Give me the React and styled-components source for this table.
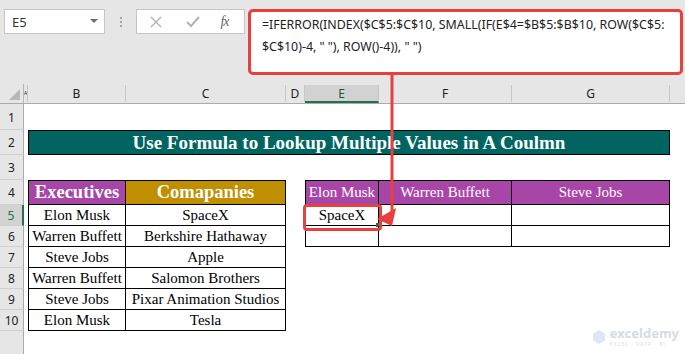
import styled, { createGlobalStyle } from 'styled-components';

const COLS = '24px 4px 98px 160px 19px 74px 133px 158px 15px';
const LETTERS = ['A', 'B', 'C', 'D', 'E', 'F', 'G', ''];

const purple = '#a846a8';
const gold = '#bf8f00';
const teal = '#006561';
const red = '#e8413d';
const green = '#217346';

const rows = [
  { n: 1, h: 26, cells: {} },
  { n: 2, h: 25, title: 'Use Formula to Lookup Multiple Values in A Coulmn' },
  { n: 3, h: 25, cells: {} },
  {
    n: 4,
    h: 25,
    top: true,
    cells: {
      B: { text: 'Executives', bg: purple, bold: true },
      C: { text: 'Comapanies', bg: gold, bold: true },
      E: { text: 'Elon Musk', bg: purple },
      F: { text: 'Warren Buffett', bg: purple },
      G: { text: 'Steve Jobs', bg: purple },
    },
  },
  {
    n: 5,
    h: 21,
    active: true,
    cells: {
      B: { text: 'Elon Musk' },
      C: { text: 'SpaceX' },
      E: { text: 'SpaceX', handle: true },
      F: { text: '' },
      G: { text: '' },
    },
  },
  {
    n: 6,
    h: 21,
    cells: {
      B: { text: 'Warren Buffett' },
      C: { text: 'Berkshire Hathaway' },
      E: { text: '' },
      F: { text: '' },
      G: { text: '' },
    },
  },
  { n: 7, h: 21, cells: { B: { text: 'Steve Jobs' }, C: { text: 'Apple' } } },
  { n: 8, h: 21, cells: { B: { text: 'Warren Buffett' }, C: { text: 'Salomon Brothers' } } },
  { n: 9, h: 21, cells: { B: { text: 'Steve Jobs' }, C: { text: 'Pixar Animation Studios' } } },
  { n: 10, h: 21, cells: { B: { text: 'Elon Musk' }, C: { text: 'Tesla' } } },
];

const App = () => (
  <>
    <GlobalStyle />
    <Page>
      <TopBar>
        <NameBox>
          E5
          <Caret />
        </NameBox>
        <Grip>
          <i />
          <i />
          <i />
        </Grip>
        <FxButtons>
          <FxIcon>
            <svg width="12" height="12" viewBox="0 0 12 12">
              <path d="M1 1 L11 11 M11 1 L1 11" stroke="#b3b3b3" strokeWidth="1.4" fill="none" />
            </svg>
          </FxIcon>
          <FxIcon>
            <svg width="14" height="12" viewBox="0 0 14 12">
              <path d="M1 6 L5 10 L13 1" stroke="#b3b3b3" strokeWidth="2" fill="none" />
            </svg>
          </FxIcon>
          <FxLabel>fx</FxLabel>
        </FxButtons>
        <FormulaBox>
          =IFERROR(INDEX($C$5:$C$10, SMALL(IF(E$4=$B$5:$B$10, ROW($C$5:
          <br />
          $C$10)-4, " "), ROW()-4)), " ")
        </FormulaBox>
      </TopBar>

      <HeaderRow>
        <Corner />
        {LETTERS.map((l, i) => (
          <ColHead key={i} $active={l === 'E'} $narrow={l === 'A'}>
            {l}
          </ColHead>
        ))}
      </HeaderRow>

      {rows.map((r) => (
        <Row key={r.n} $h={r.h}>
          <RowHead $active={r.active}>{r.n}</RowHead>
          <Cell />
          {r.title ? (
            <Title>{r.title}</Title>
          ) : (
            ['B', 'C', 'D', 'E', 'F', 'G'].map((c) => {
              const cell = r.cells[c];
              if (!cell) return <Cell key={c} />;
              return (
                <Cell
                  key={c}
                  $boxed
                  $top={r.top}
                  $left={c === 'B' || c === 'E'}
                  $bg={cell.bg}
                  $bold={cell.bold}
                  $light={!!cell.bg}
                >
                  {cell.text}
                  {cell.handle && <Handle />}
                </Cell>
              );
            })
          )}
          <Cell />
        </Row>
      ))}

      <Filler>
        <RowHead $blank />
      </Filler>

      <Selection />
      <Arrow width="685" height="354" viewBox="0 0 685 354">
        <rect x="390.5" y="75" width="3" height="138" fill={red} />
        <polygon points="377,219 396,208 392,226" fill={red} />
      </Arrow>

      <Watermark>
        <svg width="14" height="16" viewBox="0 0 14 16">
          <path d="M7 1 L13 4.5 L13 11.5 L7 15 L1 11.5 L1 4.5 Z" fill="#dfe6f5" />
        </svg>
        <WmText>
          <WmName>exceldemy</WmName>
          <WmTag>EXCEL · DATA · BI</WmTag>
        </WmText>
      </Watermark>
    </Page>
  </>
);

const GlobalStyle = createGlobalStyle`
  body {
    margin: 0;
    background: #fff;
    overflow: hidden;
  }
`;

const Page = styled.div`
  position: relative;
  width: 685px;
  height: 354px;
  overflow: hidden;
  background: #fff;
  font-family: 'Liberation Serif', serif;
`;

const TopBar = styled.div`
  display: flex;
  align-items: flex-start;
  height: 84px;
  padding: 9px 0 0 4px;
  box-sizing: border-box;
  background: #e6e6e6;
  font-family: 'Noto Sans', sans-serif;
`;

const NameBox = styled.div`
  position: relative;
  display: flex;
  align-items: center;
  width: 101px;
  height: 25px;
  padding-left: 7px;
  box-sizing: border-box;
  border: 1px solid #c6c6c6;
  background: #fff;
  color: #333;
  font-size: 13px;
`;

const Caret = styled.span`
  position: absolute;
  right: 6px;
  top: 9px;
  border-left: 4px solid transparent;
  border-right: 4px solid transparent;
  border-top: 4px solid #6d6d6d;
`;

const Grip = styled.div`
  display: flex;
  flex-direction: column;
  align-items: center;
  gap: 2px;
  width: 31px;
  padding-top: 8px;

  i {
    width: 2px;
    height: 2px;
    background: #a5a5a5;
  }
`;

const FxButtons = styled.div`
  display: grid;
  grid-template-columns: 38px 36px 1fr;
  align-items: center;
  justify-items: center;
  width: 109px;
  height: 25px;
  padding-right: 6px;
  box-sizing: border-box;
  border: 1px solid #c6c6c6;
  background: #fff;
`;

const FxIcon = styled.span`
  display: flex;
`;

const FxLabel = styled.span`
  color: #666;
  font-family: 'Liberation Serif', serif;
  font-style: italic;
  font-size: 14px;
  letter-spacing: -1px;
`;

const FormulaBox = styled.div`
  width: 435px;
  height: 66px;
  margin-left: 3px;
  padding: 2px 0 0 11px;
  box-sizing: border-box;
  border: 3px solid ${red};
  border-radius: 5px;
  background: #fff;
  color: #222;
  font-size: 12.4px;
  line-height: 22px;
  white-space: nowrap;
  overflow: hidden;
`;

const HeaderRow = styled.div`
  display: grid;
  grid-template-columns: ${COLS};
  height: 20px;
  background: #e6e6e6;
  border-bottom: 1px solid #ababab;
  box-sizing: border-box;
  font-family: 'Noto Sans', sans-serif;
`;

const Corner = styled.div`
  position: relative;
  border-right: 1px solid #b5b5b5;

  &::after {
    content: '';
    position: absolute;
    right: 3px;
    bottom: 3px;
    border-left: 11px solid transparent;
    border-bottom: 11px solid #b8b8b8;
  }
`;

const ColHead = styled.div`
  display: flex;
  align-items: center;
  justify-content: ${(p) => (p.$narrow ? 'flex-start' : 'center')};
  margin-top: 1px;
  overflow: hidden;
  border-right: 1px solid #c6c6c6;
  border-bottom: 2px solid ${(p) => (p.$active ? green : 'transparent')};
  background: ${(p) => (p.$active ? '#d2d2d2' : 'transparent')};
  color: ${(p) => (p.$active ? '#1c5a3a' : '#222')};
  font-size: ${(p) => (p.$narrow ? '5px' : '12px')};
  padding-left: ${(p) => (p.$narrow ? '0' : '0')};

  &:last-child {
    border-right: none;
  }
`;

const Row = styled.div`
  display: grid;
  grid-template-columns: ${COLS};
  height: ${(p) => p.$h}px;
`;

const RowHead = styled.div`
  display: flex;
  align-items: center;
  justify-content: center;
  box-sizing: border-box;
  border-right: ${(p) => (p.$active ? `2px solid ${green}` : '1px solid #ababab')};
  border-bottom: ${(p) => (p.$blank ? 'none' : '1px solid #d0d0d0')};
  background: ${(p) => (p.$active ? '#d2d2d2' : '#e6e6e6')};
  color: ${(p) => (p.$active ? green : '#222')};
  font-family: 'Noto Sans', sans-serif;
  font-size: 12px;
  padding-top: 1px;
`;

const Cell = styled.div`
  position: relative;
  display: flex;
  align-items: center;
  justify-content: center;
  box-sizing: border-box;
  white-space: nowrap;
  overflow: visible;
  background: ${(p) => p.$bg || 'transparent'};
  color: ${(p) => (p.$light ? '#fff' : '#000')};
  font-size: ${(p) => (p.$bold ? '18.5px' : '15px')};
  font-weight: ${(p) => (p.$bold ? 700 : 400)};
  border-right: ${(p) => (p.$boxed ? '1px solid #000' : 'none')};
  border-bottom: ${(p) => (p.$boxed ? '1px solid #000' : 'none')};
  border-top: ${(p) => (p.$top ? '1px solid #000' : 'none')};
  border-left: ${(p) => (p.$left ? '1px solid #000' : 'none')};
`;

const Title = styled.div`
  grid-column: 3 / 9;
  display: flex;
  align-items: center;
  justify-content: center;
  border: 1px solid #000;
  background: ${teal};
  color: #fff;
  font-size: 19px;
  font-weight: 700;
`;

const Handle = styled.span`
  position: absolute;
  right: -2px;
  bottom: -2px;
  width: 4px;
  height: 4px;
  background: ${green};
`;

const Filler = styled.div`
  display: grid;
  grid-template-columns: ${COLS};
  height: 23px;
`;

const Selection = styled.div`
  position: absolute;
  left: 303px;
  top: 204px;
  width: 79px;
  height: 27px;
  box-sizing: border-box;
  border: 3px solid ${red};
  border-radius: 4px;
`;

const Arrow = styled.svg`
  position: absolute;
  left: 0;
  top: 0;
  pointer-events: none;
`;

const Watermark = styled.div`
  position: absolute;
  right: 6px;
  bottom: 7px;
  display: flex;
  align-items: center;
  gap: 4px;
  font-family: 'Noto Sans', sans-serif;
  color: #d6dbe6;
`;

const WmText = styled.div`
  display: flex;
  flex-direction: column;
`;

const WmName = styled.span`
  font-size: 13px;
  font-weight: 700;
  line-height: 13px;
`;

const WmTag = styled.span`
  margin-top: 1px;
  font-size: 5px;
  line-height: 6px;
  letter-spacing: 1px;
`;

export default App;
